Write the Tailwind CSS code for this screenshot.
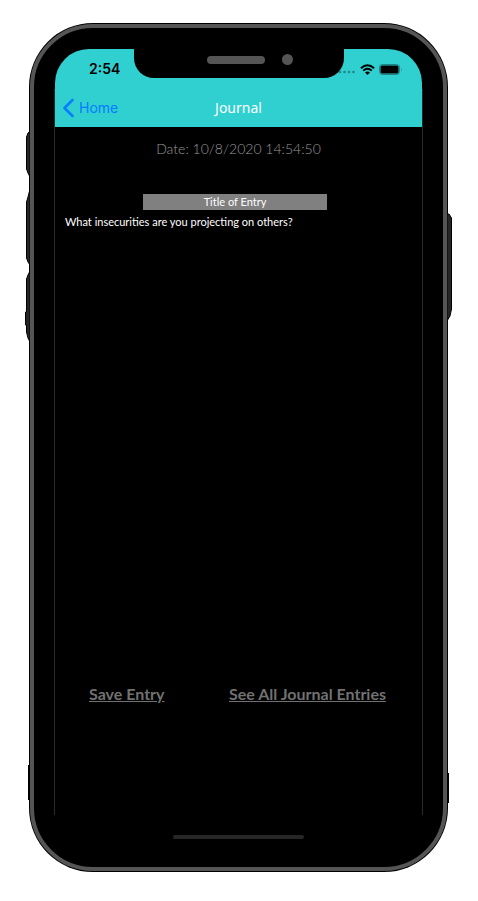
<!DOCTYPE html>
<html lang="en">
<head>
<meta charset="utf-8">
<meta name="viewport" content="width=device-width, initial-scale=1">
<title>Journal</title>
<script src="https://cdn.jsdelivr.net/npm/@tailwindcss/browser@4"></script>
</head>
<body class="bg-white">
<div class="flex h-screen min-h-[600px] flex-col pt-[23px] pr-[30px] pb-[29px] pl-[29px]">
  <div class="relative flex grow flex-col rounded-[64px] bg-black p-px">
    <!-- Side buttons -->
    <svg class="absolute top-[106px] -left-1 h-[216px] w-[5px]" viewBox="0 0 5 216" aria-hidden="true">
      <g fill="#262626" stroke="#000" stroke-width="1">
        <path d="M5 2L3 4L1.500 8V40L3 44L5 48Z"/>
        <path d="M5 60L3 68L1.500 73V129L3 133L5 136Z"/>
        <path d="M5 142L3 146L1.500 150V183H.500V196H1.500V203L3 209L5 213Z"/>
      </g>
    </svg>
    <svg class="absolute top-[190px] -right-1 h-[110px] w-[5px]" viewBox="0 0 5 110" aria-hidden="true">
      <path d="M0 1H2L4.500 5V96L3 103L0 108Z" fill="#262626" stroke="#000"/>
    </svg>
    <div class="absolute bottom-[72px] -left-px h-[35px] w-px bg-black"></div>
    <div class="absolute -right-px bottom-[69px] h-[30px] w-px bg-black"></div>

    <!-- Metal band and bezel -->
    <div class="flex grow flex-col rounded-[63px] border-4 border-[#555] bg-black px-5 pt-[21px] pb-5">
      <div class="relative flex grow flex-col">
        <div class="pointer-events-none absolute inset-x-0 top-10 bottom-8 border-x border-[#2a2a2a]"></div>

        <header class="relative mx-px flex flex-col rounded-t-[34px] bg-[#30cfd0] text-black">
          <div class="flex h-10 items-center justify-between pr-[19px] pl-[34px]">
            <span class="font-['Inter',sans-serif] text-sm font-semibold">2:54</span>
            <div class="flex items-center gap-1">
              <svg class="mt-1.5 h-1 w-5" viewBox="0 0 20 4" fill="#1f898a" aria-hidden="true"><circle cx="4" cy="2" r="1.300"/><circle cx="8.500" cy="2" r="1.300"/><circle cx="13" cy="2" r="1.300"/><circle cx="17.500" cy="2" r="1.300"/></svg>
              <svg class="h-[11px] w-[15px]" viewBox="0 0 15 11" fill="none" stroke="#000" stroke-width="1.900" role="img" aria-label="Wi-Fi"><path d="M.9 4.200Q7.500-1.800 14.100 4.200M3.200 6.600Q7.500 2.800 11.800 6.600"/><path d="M5 8.500Q7.500 6.600 10 8.500L7.500 11Z" fill="#000" stroke="none"/></svg>
              <svg class="h-[11px] w-6" viewBox="0 0 24 11" role="img" aria-label="Battery"><rect x=".5" y=".5" width="20" height="10" rx="2.700" fill="none" stroke="#1d8788"/><rect x="1.500" y="1.500" width="18" height="8" rx="1.500"/><path d="M22 3.700Q23.500 5.500 22 7.300Z" fill="#1d8788"/></svg>
            </div>
          </div>
          <nav class="grid h-[38px] grid-cols-[1fr_auto_1fr] items-center px-2">
            <a href="#home" class="flex items-center gap-1 font-['Inter',sans-serif] text-sm text-[#087cff]">
              <svg class="h-5 w-3" viewBox="0 0 12 20" fill="none" stroke="currentColor" stroke-width="2.500" stroke-linecap="round" stroke-linejoin="round" aria-hidden="true"><path d="M9.500 2L1.500 10L9.500 18"/></svg>
              Home
            </a>
            <h1 class="font-['Noto_Sans',sans-serif] text-sm text-white">Journal</h1>
          </nav>
        </header>

        <!-- Notch -->
        <div class="absolute top-0 left-1/2 h-[29px] w-[210px] -translate-x-1/2 rounded-b-[20px] bg-black">
          <div class="mt-[7px] ml-[73px] h-2 w-[58px] rounded-full bg-[#555]"></div>
          <div class="absolute top-[5px] left-[148px] size-[11px] rounded-full bg-[#555]"></div>
        </div>

        <main class="mx-px flex grow flex-col font-['Lato',sans-serif]">
          <p class="mt-3 text-center text-sm leading-5 font-light text-[#999]">Date: 10/8/2020 14:54:50</p>
          <div class="mt-[35px] pr-[95px] pl-[88px]">
            <input aria-label="Title of entry" value="Title of Entry" class="block h-4 w-full bg-[#808080] text-center text-[11px] leading-4 text-white">
          </div>
          <textarea aria-label="Journal entry" class="mt-1 block w-full grow resize-none bg-transparent px-[10px] text-[11px] leading-4 text-white">What insecurities are you projecting on others?</textarea>
          <div class="flex justify-between pr-9 pl-[34px] text-base leading-5 font-bold text-[#717171]">
            <button type="button" class="underline">Save Entry</button>
            <a href="#entries" class="underline">See All Journal Entries</a>
          </div>
          <div class="mx-auto mt-[131px] mb-2 h-1 w-[131px] rounded-full bg-[#262626]"></div>
        </main>
      </div>
    </div>
  </div>
</div>
</body>
</html>
